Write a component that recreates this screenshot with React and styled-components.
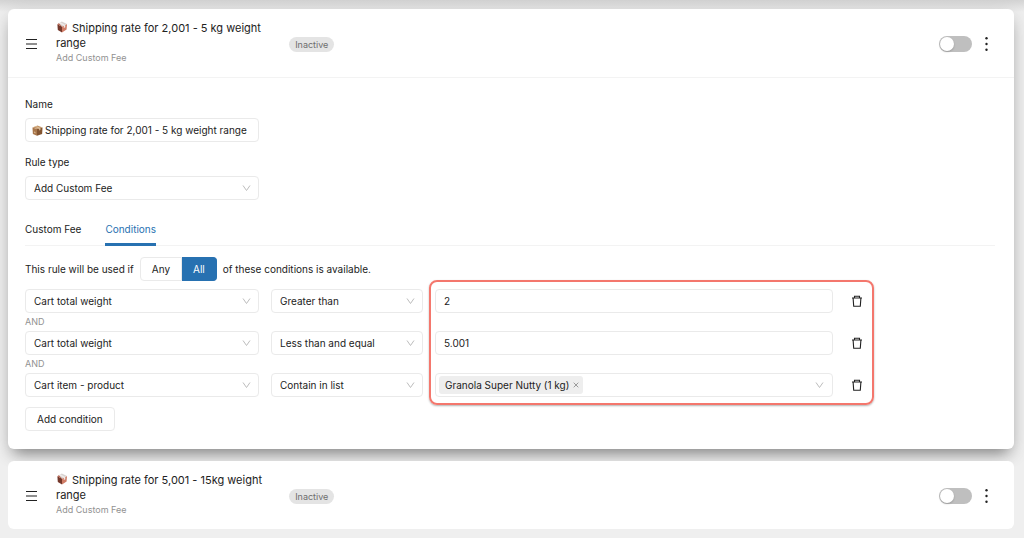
import React, { useState } from "react";
import styled, { createGlobalStyle } from "styled-components";

const GlobalStyle = createGlobalStyle`
  * {
    box-sizing: border-box;
  }
  body {
    margin: 0;
    background: #efefef;
    color: #222;
    font-family: Inter, "Liberation Sans", sans-serif;
    font-size: 10px;
    line-height: 16px;
  }
  button, input, select {
    font: inherit;
    color: inherit;
    margin: 0;
  }
`;

const Page = styled.main`
  display: flex;
  flex-direction: column;
  gap: 12px;
  padding: 9px 10px 9px 8px;
  background: linear-gradient(#d3d3d3, #efefef 12px);
`;
const Card = styled.section`
  background: #fff;
  border-radius: 6px;
  box-shadow: ${(p) =>
    p.$open
      ? "0 10px 14px -6px rgba(0, 0, 0, 0.4), 0 4px 20px rgba(0, 0, 0, 0.12)"
      : "none"};
`;
const Header = styled.header`
  display: flex;
  align-items: center;
  height: ${(p) => (p.$open ? "69px" : "68px")};
  padding: 2px 20px 0 17px;
  border-bottom: ${(p) => (p.$open ? "1px solid #f3f3f3" : "none")};
`;
const IconButton = styled.button`
  display: flex;
  align-items: center;
  justify-content: center;
  padding: 0;
  border: 0;
  background: none;
  cursor: pointer;
`;
const Heading = styled.div`
  flex: 0 0 22%;
  margin: 0 20px 3px 18px;
`;
const Title = styled.h2`
  margin: 0;
  font-size: 11px;
  font-weight: 400;
  line-height: 15px;
  svg {
    margin-right: 4px;
    vertical-align: -1px;
  }
`;
const SubTitle = styled.div`
  font-size: 9px;
  line-height: 14px;
  color: #929292;
`;
const Badge = styled.span`
  padding: 0 6px;
  border-radius: 8px;
  background: #e4e4e4;
  color: #6e6e6e;
  font-size: 9px;
  line-height: 15px;
`;
const Actions = styled.div`
  display: flex;
  align-items: center;
  gap: 7px;
  margin-left: auto;
`;
const Switch = styled.input`
  appearance: none;
  display: flex;
  width: 33px;
  height: 16px;
  padding: 1px;
  border-radius: 8px;
  background: #bfbfbf;
  cursor: pointer;
  &::before {
    content: "";
    width: 14px;
    height: 14px;
    border-radius: 50%;
    background: #fff;
    box-shadow: 0 1px 2px rgba(0, 0, 0, 0.2);
  }
  &:checked {
    justify-content: flex-end;
    background: #2771b1;
  }
`;

const Body = styled.div`
  padding: 18px 19px 18px 17px;
`;
// 24 column row, every cell keeps a 12px gutter on its right
const Row = styled.div`
  display: grid;
  grid-template-columns: 6fr 4fr 10fr 4fr;
  margin-right: -14px;
`;
const Cell = styled.div`
  min-width: 0;
  padding-right: 12px;
`;
const Field = styled(Cell)`
  display: flex;
  flex-direction: column;
  gap: 6px;
  margin-bottom: 12px;
`;
const Label = styled.label`
  line-height: 16px;
`;
const Box = styled.div`
  display: flex;
  align-items: center;
  height: 24px;
  padding: 0 ${(p) => (p.$tight ? "8px 0 3px" : "8px")};
  border: 1px solid #eaeaea;
  border-radius: 4px;
  background: #fff;
`;
const NameBox = styled(Box)`
  padding: 0 4px 0 6px;
`;
const TextInput = styled.input`
  flex: 1;
  min-width: 0;
  height: 20px;
  padding: 0 0 0 ${(p) => (p.$icon ? "2px" : "0")};
  border: 0;
  outline: 0;
  background: none;
`;
const SelectWrap = styled.div`
  display: grid;
  align-items: center;
  > * {
    grid-area: 1 / 1;
  }
  > svg {
    justify-self: end;
    margin-right: 8px;
    pointer-events: none;
  }
`;
const StyledSelect = styled.select`
  appearance: none;
  width: 100%;
  height: 24px;
  padding: 0 20px 0 8px;
  border: 1px solid #eaeaea;
  border-radius: 4px;
  background: #fff;
`;

const Tabs = styled.div`
  display: flex;
  gap: 24px;
  margin-top: 8px;
  border-bottom: 1px solid #f3f3f3;
`;
const Tab = styled.button`
  height: 26px;
  margin-bottom: -1px;
  padding: 0 0 6px;
  border: 0;
  border-bottom: 3px solid ${(p) => (p.$active ? "#2771b1" : "transparent")};
  background: none;
  color: ${(p) => (p.$active ? "#2771b1" : "inherit")};
  cursor: pointer;
`;
const Sentence = styled.div`
  display: flex;
  align-items: center;
  gap: 6px;
  margin: 11px 0 8px;
`;
const RadioGroup = styled.div`
  display: flex;
`;
const RadioButton = styled.label`
  height: 24px;
  padding: 0 11px;
  border: 1px solid ${(p) => (p.$active ? "#2771b1" : "#eaeaea")};
  border-radius: ${(p) => (p.$active ? "0 4px 4px 0" : "4px 0 0 4px")};
  background: ${(p) => (p.$active ? "#2771b1" : "#fff")};
  color: ${(p) => (p.$active ? "#fff" : "inherit")};
  line-height: 22px;
  cursor: pointer;
  input {
    appearance: none;
    width: 0;
    height: 0;
  }
  & + & {
    border-left: 0;
  }
`;
const HighlightArea = styled.div`
  position: relative;
  margin: 0 -14px 10px 0;
`;
const Conditions = styled(Row)`
  margin: 0;
`;
const And = styled.div`
  grid-column: 1 / -1;
  color: #929292;
  font-size: 9px;
  line-height: 18px;
`;
const DeleteCell = styled(Cell)`
  display: flex;
  align-items: center;
  padding-left: 4px;
`;
const TrashButton = styled(IconButton)`
  width: 16px;
  height: 16px;
`;
const Highlight = styled.div`
  position: absolute;
  inset: -9px auto -8px calc(100% * 10 / 24 - 6px);
  width: calc(100% * 10 / 24 + 35px);
  border: 2px solid #f4776d;
  border-radius: 8px;
  box-shadow: 0 1px 2px rgba(0, 0, 0, 0.3);
  pointer-events: none;
`;
const Tag = styled.span`
  display: flex;
  align-items: center;
  gap: 4px;
  height: 18px;
  padding: 0 4px 0 6px;
  border-radius: 3px;
  background: #eee;
  white-space: nowrap;
`;
const AddButton = styled.button`
  height: 24px;
  padding: 0 11px;
  border: 1px solid #eaeaea;
  border-radius: 4px;
  background: #fff;
  cursor: pointer;
`;

const MenuIcon = () => (
  <svg width="13" height="12" viewBox="0 0 13 12" stroke="#222" strokeWidth="1.2">
    <path d="M1 1.5h11M1 6h11M1 10.5h11" />
  </svg>
);
const DotsIcon = () => (
  <svg width="15" height="16" viewBox="0 0 15 16" fill="#222">
    <circle cx="7.5" cy="2.2" r="1.2" />
    <circle cx="7.5" cy="8" r="1.2" />
    <circle cx="7.5" cy="13.8" r="1.2" />
  </svg>
);
const ChevronIcon = () => (
  <svg width="9" height="8" viewBox="0 0 9 8" fill="none" stroke="#bdbdbd">
    <path d="M1 1.5l3.5 5 3.5-5" />
  </svg>
);
const TrashIcon = () => (
  <svg width="12" height="12" viewBox="0 0 12 12" fill="none" stroke="#222" strokeWidth="1.1">
    <path d="M1 3h10M3.5 3V1.2h5V3M2.1 3l.6 8.2h6.6L9.9 3" />
  </svg>
);
const CloseIcon = () => (
  <svg width="6" height="6" viewBox="0 0 6 6" stroke="#909090" strokeWidth=".9">
    <path d="M.7.7l4.6 4.6M5.3.7L.7 5.3" />
  </svg>
);
const ParcelIcon = () => (
  <svg width="12" height="12" viewBox="0 0 12 12">
    <path d="M1.4 3.2L6 5.6v6L1.8 9z" fill="#74382b" />
    <path d="M11 3L6 5.6v6l4.6-3z" fill="#cf7c66" />
    <path d="M1.4 3.2L5.8.5 11 3 6 5.6z" fill="#d8d3d1" />
    <path d="M2.8 2.2L7.8 4.7v2.4l1.5-.9V3.9L4.4 1.3z" fill="#eeeae8" />
    <path d="M1.4 3.2l1.4-1L6 5.6l-1.5-.7z" fill="#b6604b" />
  </svg>
);
const BoxIcon = () => (
  <svg width="11" height="11" viewBox="0 0 11 11">
    <path d="M.5 2.4L5 4v6.8L.9 8.9z" fill="#a8764a" />
    <path d="M10.5 2.4L5 4v6.8l5.1-1.9z" fill="#835531" />
    <path d="M.5 2.4L5.5.4l5 2L5 4z" fill="#c39466" />
    <path d="M2.4 1.6L7.2 3.4v2l1.2-.4V3L3.7 1.1z" fill="#dfc29c" />
    <path d="M2 6.5l1.5.6v1.4L2 7.8z" fill="#d7b58e" />
  </svg>
);

const Select = ({ value, ...rest }) => (
  <SelectWrap>
    <StyledSelect defaultValue={value} {...rest}>
      <option>{value}</option>
    </StyledSelect>
    <ChevronIcon />
  </SelectWrap>
);

const RuleHeader = ({ title, open }) => {
  const [active, setActive] = useState(false);
  return (
    <Header $open={open}>
      <IconButton aria-label="Reorder rule">
        <MenuIcon />
      </IconButton>
      <Heading>
        <Title>
          <ParcelIcon />
          {title}
        </Title>
        <SubTitle>Add Custom Fee</SubTitle>
      </Heading>
      <Badge>{active ? "Active" : "Inactive"}</Badge>
      <Actions>
        <Switch
          type="checkbox"
          role="switch"
          aria-label="Rule active"
          checked={active}
          onChange={() => setActive(!active)}
        />
        <IconButton aria-label="More actions">
          <DotsIcon />
        </IconButton>
      </Actions>
    </Header>
  );
};

const conditions = [
  { subject: "Cart total weight", operator: "Greater than", value: "2" },
  { subject: "Cart total weight", operator: "Less than and equal", value: "5.001" },
  { subject: "Cart item - product", operator: "Contain in list", tag: "Granola Super Nutty (1 kg)" },
];

const Condition = ({ subject, operator, value, tag }) => (
  <>
    <Cell>
      <Select value={subject} aria-label="Subject" />
    </Cell>
    <Cell>
      <Select value={operator} aria-label="Operator" />
    </Cell>
    <Cell>
      {tag ? (
        <Box $tight>
          <Tag>
            {tag}
            <IconButton aria-label="Remove product">
              <CloseIcon />
            </IconButton>
          </Tag>
          <TextInput role="combobox" aria-label="Products" aria-expanded="false" />
          <ChevronIcon />
        </Box>
      ) : (
        <Box>
          <TextInput defaultValue={value} aria-label="Value" />
        </Box>
      )}
    </Cell>
    <DeleteCell>
      <TrashButton aria-label="Delete condition">
        <TrashIcon />
      </TrashButton>
    </DeleteCell>
  </>
);

const App = () => {
  const [tab, setTab] = useState("Conditions");
  const [match, setMatch] = useState("All");

  return (
    <>
      <GlobalStyle />
      <Page>
        <Card $open>
          <RuleHeader open title="Shipping rate for 2,001 - 5 kg weight range" />
          <Body>
            <Row>
              <Field>
                <Label htmlFor="name">Name</Label>
                <NameBox>
                  <BoxIcon />
                  <TextInput
                    $icon
                    id="name"
                    defaultValue="Shipping rate for 2,001 - 5 kg weight range"
                  />
                </NameBox>
              </Field>
            </Row>
            <Row>
              <Field>
                <Label htmlFor="type">Rule type</Label>
                <Select id="type" value="Add Custom Fee" />
              </Field>
            </Row>
            <Tabs role="tablist">
              {["Custom Fee", "Conditions"].map((name) => (
                <Tab
                  key={name}
                  role="tab"
                  aria-selected={tab === name}
                  $active={tab === name}
                  onClick={() => setTab(name)}
                >
                  {name}
                </Tab>
              ))}
            </Tabs>
            <Sentence>
              This rule will be used if
              <RadioGroup role="radiogroup">
                {["Any", "All"].map((name) => (
                  <RadioButton key={name} $active={match === name}>
                    <input
                      type="radio"
                      name="match"
                      checked={match === name}
                      onChange={() => setMatch(name)}
                    />
                    {name}
                  </RadioButton>
                ))}
              </RadioGroup>
              of these conditions is available.
            </Sentence>
            <HighlightArea>
              <Conditions>
                {conditions.map((item, i) => (
                  <React.Fragment key={i}>
                    {i > 0 && <And>AND</And>}
                    <Condition {...item} />
                  </React.Fragment>
                ))}
              </Conditions>
              <Highlight />
            </HighlightArea>
            <AddButton>Add condition</AddButton>
          </Body>
        </Card>
        <Card>
          <RuleHeader title="Shipping rate for 5,001 - 15kg weight range" />
        </Card>
      </Page>
    </>
  );
};

export default App;
